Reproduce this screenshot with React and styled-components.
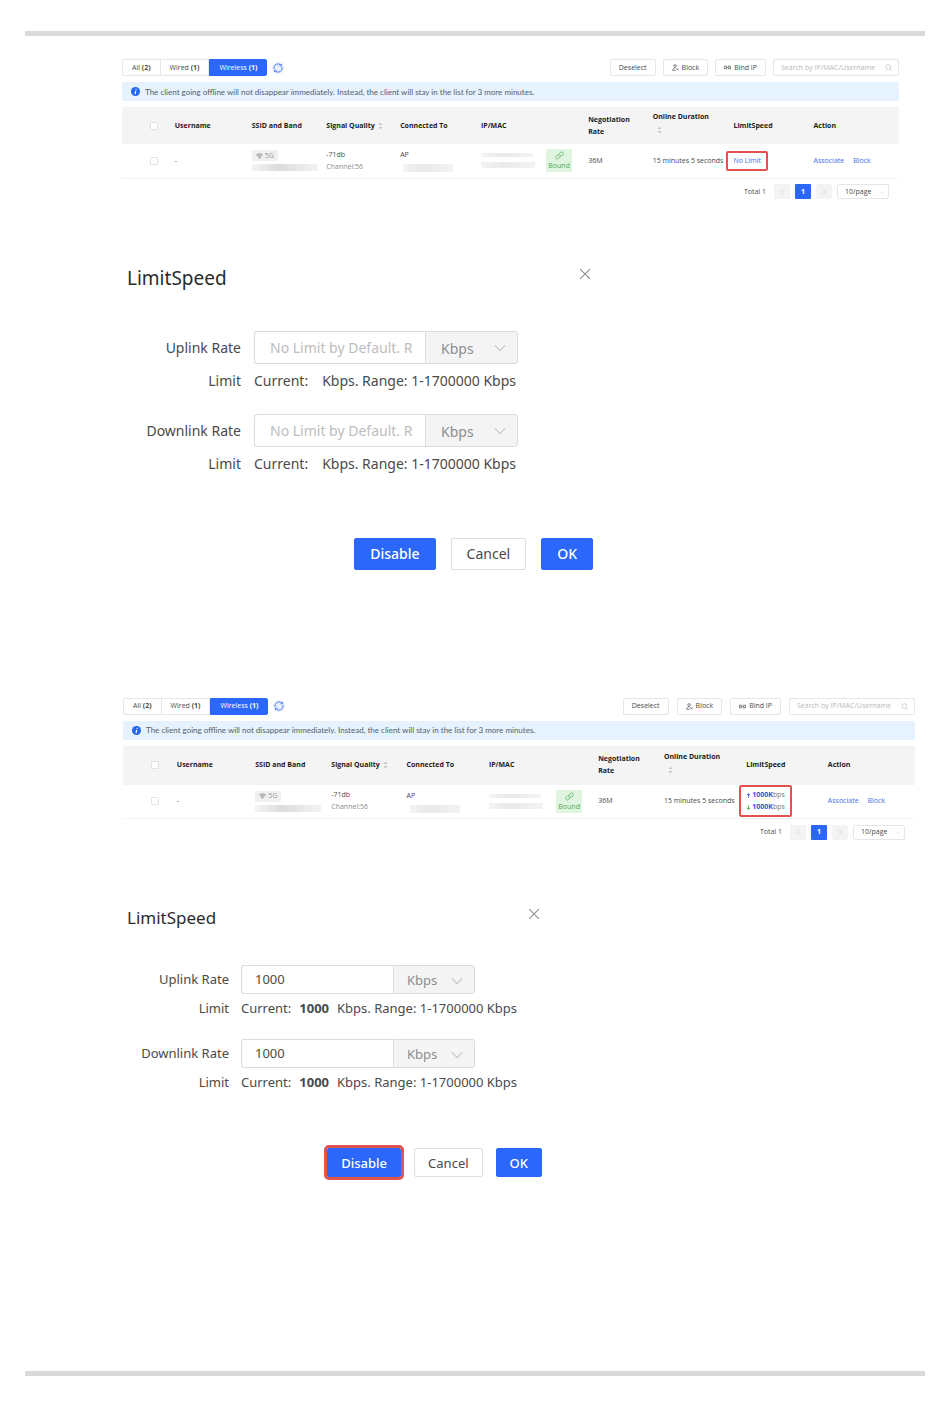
import { useId, useState } from "react";
import styled, { createGlobalStyle } from "styled-components";

const GlobalStyle = createGlobalStyle`
  * {
    box-sizing: border-box;
  }

  body {
    margin: 0;
    background: #fff;
    color: #4a4a4a;
    font-family: "Noto Sans", "Open Sans", sans-serif;
  }

  button, input, select {
    margin: 0;
    font: inherit;
    color: inherit;
  }
`;

const Page = styled.div`
  padding: 31px 25px;
`;

const Rule = styled.hr`
  height: 5px;
  margin: 0;
  border: 0;
  background: #d9d9d9;
`;

const Content = styled.main`
  padding: 23px 0 194px 97px;
`;

/* ---------- client list ---------- */

const Panel = styled.section`
  margin: 0 ${(p) => p.$right}px 0 ${(p) => p.$left}px;
  font-family: "Open Sans", "Noto Sans", sans-serif;
  font-size: 7px;
  line-height: 12px;
`;

const Toolbar = styled.div`
  display: flex;
  align-items: center;
  justify-content: space-between;
`;

const ToolGroup = styled.div`
  display: flex;
  align-items: center;
  gap: ${(p) => p.$gap}px;
`;

const Tabs = styled.div`
  display: flex;
  height: 17px;
`;

const Tab = styled.button`
  padding: 0 9px;
  border: 1px solid ${(p) => (p.$active ? "#2b67fb" : "#e6e6e6")};
  border-left-width: ${(p) => (p.$first || p.$active ? 1 : 0)}px;
  border-radius: ${(p) => (p.$first ? "2px 0 0 2px" : p.$last ? "0 2px 2px 0" : "0")};
  background: ${(p) => (p.$active ? "#2b67fb" : "#fff")};
  color: ${(p) => (p.$active ? "#fff" : "#4a4a4a")};
  white-space: nowrap;
`;

const RoundButton = styled.button`
  display: flex;
  align-items: center;
  justify-content: center;
  width: 12px;
  height: 12px;
  padding: 0;
  border: 0;
  border-radius: 50%;
  background: #e9efff;
  color: #4a78ee;
`;

const ToolButton = styled.button`
  display: flex;
  align-items: center;
  gap: 3px;
  height: 17px;
  padding: 0 8px;
  border: 1px solid #e6e6e6;
  border-radius: 2px;
  background: #fff;
  white-space: nowrap;
`;

const SearchBox = styled.div`
  display: flex;
  align-items: center;
  width: 126px;
  height: 17px;
  padding: 0 6px 0 7px;
  border: 1px solid #e6e6e6;
  border-radius: 2px;
  color: #b9b9b9;

  input {
    flex: 1;
    min-width: 0;
    padding: 0;
    border: 0;
    outline: 0;
    background: none;
  }

  input::placeholder {
    color: #b9b9b9;
  }
`;

const Alert = styled.p`
  display: flex;
  align-items: center;
  gap: 5px;
  height: 19px;
  margin: 6px 0;
  padding: 0 9px;
  border-radius: 2px;
  background: #e6f3fe;
  color: #54606c;
  font-family: Lato, "Open Sans", sans-serif;
  font-size: 8px;
`;

const Table = styled.table`
  width: 100%;
  border-collapse: collapse;
  table-layout: fixed;

  th, td {
    padding: 0;
    text-align: left;
    vertical-align: middle;
  }

  th {
    height: ${(p) => p.$head}px;
    background: #f4f4f4;
    color: #1c1c1c;
    font-weight: 700;
  }

  td {
    height: 34px;
    border-bottom: 1px solid #f3f3f3;
    white-space: nowrap;
  }
`;

const Check = styled.input`
  appearance: none;
  display: block;
  width: 8px;
  height: 8px;
  margin-left: 28px;
  border: 1px solid #e2e2e2;
  border-radius: 1px;
  background: #fff;
`;

const HeadFlex = styled.span`
  display: flex;
  flex-direction: ${(p) => (p.$stacked ? "column" : "row")};
  align-items: ${(p) => (p.$stacked ? "flex-start" : "center")};
  gap: 3px;
  padding-bottom: ${(p) => (p.$stacked ? 6 : 0)}px;
  white-space: nowrap;

  svg {
    flex: none;
    margin-left: ${(p) => (p.$stacked ? 4 : 0)}px;
  }
`;

const Stack = styled.div`
  display: flex;
  flex-direction: column;
  align-items: flex-start;
  gap: ${(p) => p.$gap || 0}px;
`;

const Band = styled.span`
  display: flex;
  align-items: center;
  gap: 2px;
  height: 11px;
  padding: 0 4px;
  border-radius: 1px;
  background: #f0f0f0;
  color: #9a9a9a;
`;

const Muted = styled.span`
  color: #8d8d8d;
`;

const Masked = styled.span`
  display: block;
  width: ${(p) => p.$w}px;
  height: ${(p) => p.$h}px;
  margin-left: ${(p) => p.$indent || 0}px;
  background: linear-gradient(90deg, #f4f4f4, ${(p) => p.$tone || "#e9e9e9"} 40%, #f3f3f3);
`;

const AddressCell = styled.div`
  display: flex;
  align-items: center;
  justify-content: space-between;
  padding-right: 16px;
`;

const Bound = styled.span`
  display: flex;
  flex-direction: column;
  align-items: center;
  width: 26px;
  height: 23px;
  padding-top: 2px;
  border-radius: 1px;
  background: #dff5df;
  color: #53a853;
  line-height: 11px;
`;

const Mark = styled.span`
  display: inline-block;
  margin-left: -7px;
  padding: 2px 5px;
  border: 2px solid #e2534f;
  border-radius: 2px;
  vertical-align: middle;
`;

const Links = styled.span`
  display: flex;
  gap: 9px;
`;

const Link = styled.a`
  color: #3f6fe8;
  text-decoration: none;
`;

const Speed = styled.span`
  display: flex;
  align-items: center;
  gap: 1px;
  color: #777;

  b {
    color: #2f55dc;
  }
`;

const Pager = styled.nav`
  display: flex;
  align-items: center;
  justify-content: flex-end;
  height: 16px;
  margin: 5px 10px 0 0;
`;

const Total = styled.span`
  margin-right: 3px;
`;

const PageButton = styled.button`
  display: flex;
  align-items: center;
  justify-content: center;
  width: 16px;
  height: 15px;
  margin-left: 5px;
  padding: 0;
  border: 0;
  border-radius: 1px;
  background: ${(p) => (p.$active ? "#2b67fb" : "#f3f3f3")};
  color: ${(p) => (p.$active ? "#fff" : "#bbb")};
  font-weight: 700;
`;

const SelectBox = styled.span`
  position: relative;
  display: flex;

  select {
    appearance: none;
    width: 100%;
    border: 1px solid #e6e6e6;
    border-radius: 2px;
    background: #fff;
  }

  svg {
    position: absolute;
    top: 50%;
    right: ${(p) => p.$inset}px;
    transform: translateY(-50%);
    color: #bdbdbd;
    pointer-events: none;
  }
`;

const PageSize = styled(SelectBox)`
  width: 52px;
  height: 15px;
  margin-left: 5px;

  select {
    padding: 0 7px;
  }
`;

/* ---------- limit dialog ---------- */

const sizes = {
  large: { width: 471, title: 19, text: 14, line: 33, label: 105, gap: 13, field: 264, unit: 93, row: 17, top: 41, foot: 58, button: 32, pad: 15, space: 15, end: 128 },
  small: { width: 420, title: 17, text: 13, line: 29, label: 94, gap: 12, field: 234, unit: 82, row: 16, top: 35, foot: 51, button: 29, pad: 13, space: 13, end: 0 },
};

const DialogBox = styled.section`
  width: ${(p) => p.$s.width}px;
  max-width: 100%;
  margin: 66px 0 ${(p) => p.$s.end}px;
  padding-left: 5px;
  font-size: ${(p) => p.$s.text}px;
  line-height: ${(p) => p.$s.line}px;
`;

const DialogHead = styled.header`
  display: flex;
  align-items: flex-start;
  justify-content: space-between;
  height: 24px;
  padding-right: 2px;

  h2 {
    margin: 0;
    color: #2b2b2b;
    font-size: ${(p) => p.$s.title}px;
    font-weight: 400;
    line-height: 24px;
  }
`;

const CloseButton = styled.button`
  display: flex;
  padding: 2px 0;
  border: 0;
  background: none;
  color: #8c8c8c;
`;

const Fields = styled.div`
  display: flex;
  flex-direction: column;
  gap: ${(p) => p.$s.row}px;
  margin-top: ${(p) => p.$s.top}px;
`;

const Field = styled.div`
  display: grid;
  grid-template-columns: ${(p) => p.$s.label}px 1fr;
  column-gap: ${(p) => p.$s.gap}px;
  padding-left: ${(p) => p.$s.row - 8}px;

  label {
    text-align: right;
  }
`;

const InputGroup = styled.div`
  display: flex;
  width: ${(p) => p.$s.field}px;
  height: ${(p) => p.$s.line}px;

  input {
    flex: 1;
    min-width: 0;
    padding: 0 8px 0 ${(p) => p.$s.pad}px;
    border: 1px solid #dcdcdc;
    border-right: 0;
    border-radius: 3px 0 0 3px;
    outline: 0;
  }

  input::placeholder {
    color: #bdbdbd;
  }
`;

const UnitSelect = styled(SelectBox)`
  width: ${(p) => p.$s.unit}px;

  select {
    padding: 0 ${(p) => p.$s.pad}px;
    border-color: #dcdcdc;
    border-radius: 0 3px 3px 0;
    background: #f4f4f4;
    color: #8e8e8e;
  }
`;

const Hint = styled.div`
  display: flex;
  gap: ${(p) => (p.$filled ? 8 : 14)}px;
  white-space: nowrap;
`;

const Footer = styled.footer`
  display: flex;
  justify-content: flex-end;
  gap: ${(p) => p.$s.space}px;
  margin-top: ${(p) => p.$s.foot}px;
`;

const DialogButton = styled.button`
  height: ${(p) => p.$s.button}px;
  padding: 0 ${(p) => p.$s.pad}px;
  border: 1px solid ${(p) => (p.$primary ? "#2b67fb" : "#dedede")};
  border-radius: 2px;
  background: ${(p) => (p.$primary ? "#2b67fb" : "#fff")};
  color: ${(p) => (p.$primary ? "#fff" : "#4a4a4a")};
  font-weight: ${(p) => (p.$primary ? 500 : 400)};
  line-height: 20px;
  outline: ${(p) => (p.$marked ? "3px solid #e2534f" : "none")};
`;

/* ---------- icons ---------- */

const Icon = ({ size, box = 16, stroke = 1, children }) => (
  <svg width={size} height={size} viewBox={`0 0 ${box} ${box}`} fill="none" stroke="currentColor" strokeWidth={stroke} aria-hidden="true">
    {children}
  </svg>
);

const RefreshIcon = () => (
  <Icon size={10} stroke={1.5}>
    <path d="M1.5 9.5A6.6 6.6 0 0 1 13 3.8M14.5 6.5A6.6 6.6 0 0 1 3 12.2" />
    <path d="M13.5 1.5v3h-3M2.5 14.5v-3h3" />
  </Icon>
);

const BlockIcon = () => (
  <Icon size={7} stroke={1.5}>
    <circle cx="7" cy="4.5" r="3" />
    <path d="M8 9C4 9 1.5 11 1.5 14.5H8M10 10l4.5 4.5M14.5 10L10 14.5" />
  </Icon>
);

const BindIcon = () => (
  <Icon size={7} stroke={1.6}>
    <path d="M7 5H1v6h6M9 5h6v6H9M4 8h8" />
  </Icon>
);

const SearchIcon = () => (
  <Icon size={7} stroke={1.4}>
    <circle cx="7.5" cy="7" r="5.5" />
    <path d="M11.5 11l3.5 4" />
  </Icon>
);

const InfoIcon = () => (
  <Icon size={9}>
    <circle cx="8" cy="8" r="8" fill="#2567ee" stroke="none" />
    <path d="M9.2 3.5l-.4 1.8M8.4 7l-1.2 5.5" stroke="#fff" strokeWidth="2.2" />
  </Icon>
);

const SortIcon = () => (
  <svg width="5" height="8" viewBox="0 0 10 16" fill="#c4c4c4" aria-hidden="true">
    <path d="M5 1l4 5H1zM5 15l4-5H1z" />
  </svg>
);

const WifiIcon = () => (
  <svg width="7" height="6" viewBox="0 0 14 12" fill="#aaa" aria-hidden="true">
    <path d="M0 3.5C4-.8 10-.8 14 3.5L7 12z" />
    <path d="M2 5.5c3-2.6 7-2.6 10 0M4 8c2-1.5 4-1.5 6 0" fill="none" stroke="#e3e3e3" />
  </svg>
);

const LinkIcon = () => (
  <Icon size={9} stroke={1.3}>
    <path d="M7 9.5a3 3 0 0 1 0-4l2.5-2.7a3 3 0 0 1 4.5 4L11.5 9.5" />
    <path d="M9 6.5a3 3 0 0 1 0 4l-2.5 2.7a3 3 0 0 1-4.5-4L4.5 6.5" />
  </Icon>
);

const ChevronIcon = ({ size }) => (
  <Icon size={size} stroke={1.2}>
    <path d="M2 6l6 6 6-6" />
  </Icon>
);

const SideIcon = ({ next }) => (
  <Icon size={6} stroke={1.5}>
    <path d={next ? "M5 2l6 6-6 6" : "M11 2L5 8l6 6"} />
  </Icon>
);

const ArrowIcon = ({ down }) => (
  <Icon size={5} stroke={2.8}>
    <path
      d={down ? "M8 1v13M3 9l5 5 5-5" : "M8 15V2M3 7l5-5 5 5"}
      stroke={down ? "#43a843" : "#2f55dc"}
    />
  </Icon>
);

const CloseIcon = () => (
  <Icon size={12} stroke={1.4}>
    <path d="M1.5 1.5l13 13M14.5 1.5l-13 13" />
  </Icon>
);

const columns = ["6.8%", "9.9%", "9.6%", "9.5%", "10.4%", "13.8%", "8.3%", "10.4%", "10.3%", "11%"];

const ClientPanel = ({ left = 0, right, gap, head, limited }) => {
  const [active, setActive] = useState("Wireless");
  const tabs = [["All", 2], ["Wired", 1], ["Wireless", 1]];

  return (
    <Panel $left={left} $right={right}>
      <Toolbar>
        <ToolGroup $gap={5}>
          <Tabs>
            {tabs.map(([name, count], i) => (
              <Tab key={name} type="button" $first={i === 0} $last={i === 2} $active={active === name} onClick={() => setActive(name)}>
                {name} <b>({count})</b>
              </Tab>
            ))}
          </Tabs>
          <RoundButton type="button" aria-label="Refresh"><RefreshIcon /></RoundButton>
        </ToolGroup>
        <ToolGroup $gap={gap}>
          <ToolButton type="button">Deselect</ToolButton>
          <ToolButton type="button"><BlockIcon />Block</ToolButton>
          <ToolButton type="button"><BindIcon />Bind IP</ToolButton>
          <SearchBox>
            <input type="text" aria-label="Search clients" placeholder="Search by IP/MAC/Username" />
            <SearchIcon />
          </SearchBox>
        </ToolGroup>
      </Toolbar>

      <Alert>
        <InfoIcon />
        The client going offline will not disappear immediately. Instead, the client will stay in the list for 3 more minutes.
      </Alert>

      <Table $head={head}>
        <colgroup>
          {columns.map((width, i) => <col key={i} width={width} />)}
        </colgroup>
        <thead>
          <tr>
            <th><Check type="checkbox" aria-label="Select all" /></th>
            <th>Username</th>
            <th>SSID and Band</th>
            <th><HeadFlex>Signal Quality <SortIcon /></HeadFlex></th>
            <th>Connected To</th>
            <th>IP/MAC</th>
            <th>Negotiation<br />Rate</th>
            <th><HeadFlex $stacked>Online Duration <SortIcon /></HeadFlex></th>
            <th>LimitSpeed</th>
            <th>Action</th>
          </tr>
        </thead>
        <tbody>
          <tr>
            <td><Check type="checkbox" aria-label="Select client" /></td>
            <td>-</td>
            <td>
              <Stack $gap={3}>
                <Band><WifiIcon />5G</Band>
                <Masked $w={66} $h={7} $tone="#dcdcdc" />
              </Stack>
            </td>
            <td>
              <Stack>
                <span>-71db</span>
                <Muted>Channel:56</Muted>
              </Stack>
            </td>
            <td>
              <Stack $gap={3}>
                <span>AP</span>
                <Masked $w={50} $h={8} $indent={3} />
              </Stack>
            </td>
            <td>
              <AddressCell>
                <Stack $gap={5}>
                  <Masked $w={52} $h={4} />
                  <Masked $w={54} $h={6} />
                </Stack>
                <Bound><LinkIcon />Bound</Bound>
              </AddressCell>
            </td>
            <td>36M</td>
            <td>15 minutes 5 seconds</td>
            <td>
              {limited ? (
                <Mark>
                  <Speed><ArrowIcon /><span><b>1000K</b>bps</span></Speed>
                  <Speed><ArrowIcon down /><span><b>1000K</b>bps</span></Speed>
                </Mark>
              ) : (
                <Mark><Link href="#limit">No Limit</Link></Mark>
              )}
            </td>
            <td>
              <Links>
                <Link href="#associate">Associate</Link>
                <Link href="#block">Block</Link>
              </Links>
            </td>
          </tr>
        </tbody>
      </Table>

      <Pager aria-label="Pages">
        <Total>Total 1</Total>
        <PageButton type="button" aria-label="Previous page"><SideIcon /></PageButton>
        <PageButton type="button" $active>1</PageButton>
        <PageButton type="button" aria-label="Next page"><SideIcon next /></PageButton>
        <PageSize $inset={4}>
          <select aria-label="Page size"><option>10/page</option></select>
          <ChevronIcon size={5} />
        </PageSize>
      </Pager>
    </Panel>
  );
};

const RateField = ({ name, s, current }) => {
  const id = useId();
  const [value, setValue] = useState(current || "");

  return (
    <Field $s={s}>
      <label htmlFor={id}>{name} Rate Limit</label>
      <div>
        <InputGroup $s={s}>
          <input id={id} type="text" value={value} placeholder="No Limit by Default. R" onChange={(e) => setValue(e.target.value)} />
          <UnitSelect $s={s} $inset={11}>
            <select aria-label={`${name} unit`}><option>Kbps</option></select>
            <ChevronIcon size={14} />
          </UnitSelect>
        </InputGroup>
        <Hint $filled={Boolean(current)}>
          <span>Current:</span>
          {current && <b>{current}</b>}
          <span>Kbps. Range: 1-1700000 Kbps</span>
        </Hint>
      </div>
    </Field>
  );
};

const LimitDialog = ({ size, current, marked }) => {
  const s = sizes[size];

  return (
    <DialogBox $s={s}>
      <DialogHead $s={s}>
        <h2>LimitSpeed</h2>
        <CloseButton type="button" aria-label="Close"><CloseIcon /></CloseButton>
      </DialogHead>
      <Fields $s={s}>
        <RateField name="Uplink" s={s} current={current} />
        <RateField name="Downlink" s={s} current={current} />
      </Fields>
      <Footer $s={s}>
        <DialogButton type="button" $s={s} $primary $marked={marked}>Disable</DialogButton>
        <DialogButton type="button" $s={s}>Cancel</DialogButton>
        <DialogButton type="button" $s={s} $primary>OK</DialogButton>
      </Footer>
    </DialogBox>
  );
};

const App = () => (
  <>
    <GlobalStyle />
    <Page>
      <Rule />
      <Content>
        <ClientPanel right={26} gap={7} head={37} />
        <LimitDialog size="large" />
        <ClientPanel left={1} right={10} gap={8} head={39} limited />
        <LimitDialog size="small" current="1000" marked />
      </Content>
      <Rule />
    </Page>
  </>
);

export default App;
